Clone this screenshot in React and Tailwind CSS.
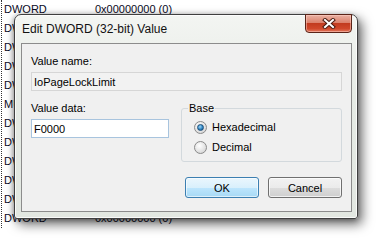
import React from "react";

const rows = [
  ["DWORD", "0x00000000 (0)"],
  ["DWORD", "0x00000000 (0)"],
  ["DWORD", "0x00000000 (0)"],
  ["DWORD", "0x00000000 (0)"],
  ["DWORD", "0x00000000 (0)"],
  ["MULTI_SZ", ""],
  ["DWORD", "0x00000000 (0)"],
  ["DWORD", "0x00000000 (0)"],
  ["DWORD", "0x00000000 (0)"],
  ["DWORD", "0x00000000 (0)"],
  ["DWORD", "0x00000000 (0)"],
  ["DWORD", "0x00000000 (0)"],
];

function Radio({ checked, label }) {
  return (
    <div className="flex h-[20px] items-center">
      <span className="flex h-[13px] w-[13px] items-center justify-center rounded-full border border-[#8a8a8a] bg-[radial-gradient(circle_at_40%_35%,#ffffff,#dcdcdc_70%,#c8c8c8)]">
        {checked && (
          <span className="h-[7px] w-[7px] rounded-full border border-[#1d4f7a] bg-[radial-gradient(circle_at_40%_35%,#9fd6f5,#2f86c4_55%,#184f80)]" />
        )}
      </span>
      <span className="ml-[5px] text-[11px] leading-[14px] text-black">{label}</span>
    </div>
  );
}

export default function App() {
  return (
    <div
      className="relative h-[242px] w-[377px] overflow-hidden bg-white"
      style={{ fontFamily: '"Liberation Sans", Arial, sans-serif' }}
    >
      {/* background registry list */}
      <div className="ml-[1px] flex flex-col border-l border-dotted border-[#333]">
        {rows.map(([t, v], i) => (
          <div key={i} className="flex h-[19px] items-center text-[11px] text-[#0a0a1e]">
            <span className="w-[93px] pl-[2px]">{t}</span>
            <span>{v}</span>
          </div>
        ))}
      </div>

      {/* dialog window */}
      <div className="absolute left-[14px] top-[14px] flex h-[205px] w-[344px] flex-col rounded-t-[7px] rounded-b-[3px] border border-[#3f3f3f] bg-[linear-gradient(to_bottom,#f3f5f2,#e6ebe5_40%,#e2e7e1)] pl-[6px] pr-[5px] pb-[6px] shadow-[4px_5px_12px_rgba(0,0,0,0.6),-1px_1px_5px_rgba(0,0,0,0.3),inset_0_0_0_1px_rgba(255,255,255,0.8)]">
        {/* title bar */}
        <div className="flex h-[28px] items-start justify-between">
          <div className="ml-[1px] flex h-[28px] items-center text-[12px] text-[#111]">
            Edit DWORD (32-bit) Value
          </div>
          <div className="-mt-[1px] flex h-[19px] w-[47px] items-center justify-center rounded-b-[4px] border border-[#5a2418] bg-[linear-gradient(to_bottom,#eab1a3,#dc826d_45%,#c23b1f_50%,#d0482b_80%,#e27a60)] shadow-[inset_0_0_0_1px_rgba(255,210,200,0.5)]">
            <svg width="14" height="11" viewBox="0 0 14 11">
              <path d="M3 2 L11 9 M11 2 L3 9" stroke="#4a1a10" strokeWidth="4" strokeLinecap="square" />
              <path d="M3 2 L11 9 M11 2 L3 9" stroke="#ffffff" strokeWidth="2" strokeLinecap="square" />
            </svg>
          </div>
        </div>

        {/* client area */}
        <div className="flex flex-1 flex-col border border-[#8c8c8c] bg-[#f0f0f0] px-[9px] pt-[10px] text-[11px] leading-[14px] text-black">
          <div className="h-[14px]">Value name:</div>
          <div className="mt-[4px] flex h-[19px] items-center border border-[#d6d6d6] bg-[#f2f2f2] pl-[2px]">
            IoPageLockLimit
          </div>

          <div className="mt-[10px] flex items-start justify-between">
            <div className="flex w-[138px] flex-col">
              <div className="h-[14px]">Value data:</div>
              <div className="mt-[4px] flex h-[19px] items-center border border-[#a8c4de] bg-white pl-[2px]">
                F0000
              </div>
            </div>
            <fieldset className="w-[161px] rounded-[3px] border border-[#d3d9dd] pb-[4px] pl-[12px]">
              <legend className="-ml-[6px] px-[1px] text-[11px] leading-[14px]">Base</legend>
              <div className="mt-[2px] flex flex-col">
                <Radio checked label="Hexadecimal" />
                <Radio label="Decimal" />
              </div>
            </fieldset>
          </div>

          <div className="mt-[15px] flex justify-end gap-[9px]">
            <button className="flex h-[21px] w-[74px] items-center justify-center rounded-[3px] border border-[#3c7fb1] bg-[linear-gradient(to_bottom,#eaf6fd,#d9f0fc_50%,#bee6fd_50%,#a7d9f5)] text-[11px] text-black shadow-[inset_0_0_0_1px_rgba(255,255,255,0.6)]">
              OK
            </button>
            <button className="flex h-[21px] w-[74px] items-center justify-center rounded-[3px] border border-[#707070] bg-[linear-gradient(to_bottom,#f2f2f2,#ebebeb_50%,#dddddd_50%,#cfcfcf)] text-[11px] text-black shadow-[inset_0_0_0_1px_rgba(255,255,255,0.7)]">
              Cancel
            </button>
          </div>
        </div>
      </div>
    </div>
  );
}
